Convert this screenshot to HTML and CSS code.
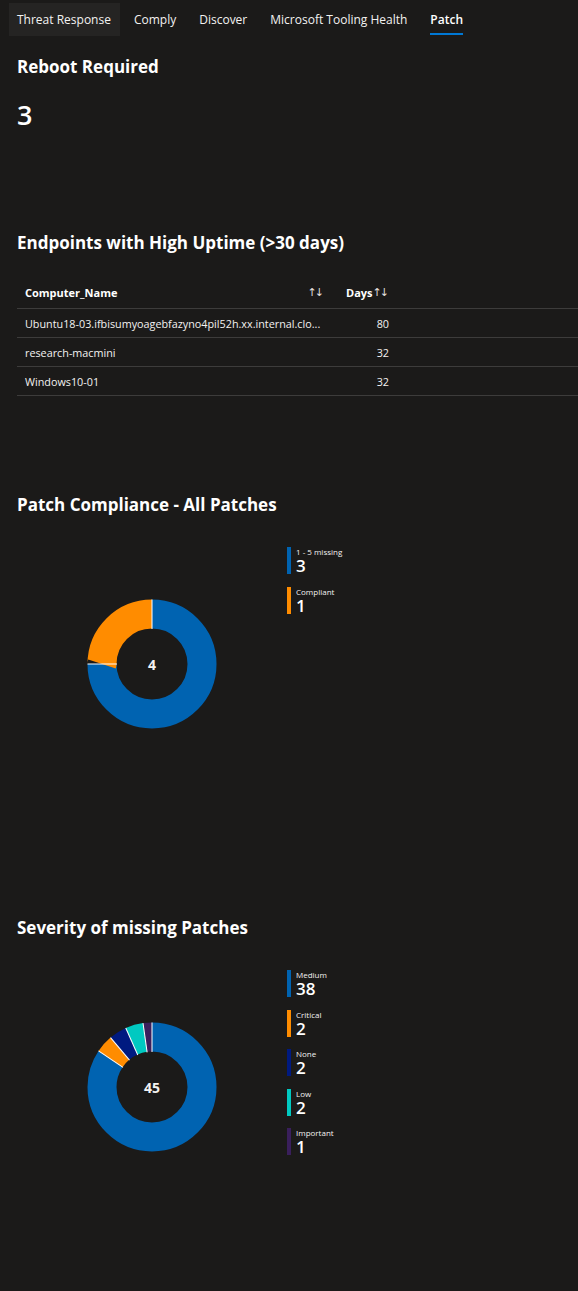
FILE: index.html
```html
<!DOCTYPE html>
<html>
<head>
<meta charset="utf-8">
<link rel="stylesheet" href="styles.css">
</head>
<body>
<nav class="tabs">
  <div class="tab tab-hover">Threat Response</div>
  <div class="tab">Comply</div>
  <div class="tab">Discover</div>
  <div class="tab">Microsoft Tooling Health</div>
  <div class="tab tab-active">Patch</div>
</nav>

<section class="card card-reboot">
  <h2 class="title">Reboot Required</h2>
  <div class="big-number">3</div>
</section>

<section class="card card-uptime">
  <h2 class="title">Endpoints with High Uptime (&gt;30 days)</h2>
  <div class="table">
    <div class="row head">
      <div class="cell name">Computer_Name<span class="sort">↑↓</span></div>
      <div class="cell days">Days<span class="sort-inline">↑↓</span></div>
    </div>
    <div class="row">
      <div class="cell name"><span class="trunc">Ubuntu18-03.ifbisumyoagebfazyno4pil52h.xx.internal.clo...</span></div>
      <div class="cell days num">80</div>
    </div>
    <div class="row">
      <div class="cell name">research-macmini</div>
      <div class="cell days num">32</div>
    </div>
    <div class="row">
      <div class="cell name">Windows10-01</div>
      <div class="cell days num">32</div>
    </div>
  </div>
</section>

<section class="card card-compliance">
  <h2 class="title">Patch Compliance - All Patches</h2>
  <div class="chart">
    <div class="donut">
      <svg width="130" height="130" viewBox="-65 -65 130 130">
        <g transform="rotate(-90)">
          <circle r="50" fill="none" stroke="#0063b1" stroke-width="29" pathLength="4" stroke-dasharray="3 1" stroke-dashoffset="0"/>
          <circle r="50" fill="none" stroke="#ff8c00" stroke-width="29" pathLength="4" stroke-dasharray="1 3" stroke-dashoffset="-3"/>
        </g>
        <g stroke="#ffffff" stroke-width="1">
          <line x1="0" y1="-35" x2="0" y2="-64.5"/>
          <line x1="0" y1="-35" x2="0" y2="-64.5" transform="rotate(270)"/>
        </g>
      </svg>
      <div class="donut-label">4</div>
    </div>
    <ul class="legend">
      <li class="legend-item"><span class="bar c-blue"></span><div class="legend-text"><span class="legend-name">1 - 5 missing</span><span class="legend-value">3</span></div></li>
      <li class="legend-item"><span class="bar c-orange"></span><div class="legend-text"><span class="legend-name">Compliant</span><span class="legend-value">1</span></div></li>
    </ul>
  </div>
</section>

<section class="card card-severity">
  <h2 class="title">Severity of missing Patches</h2>
  <div class="chart">
    <div class="donut">
      <svg width="130" height="130" viewBox="-65 -65 130 130">
        <g transform="rotate(-90)">
          <circle r="50" fill="none" stroke="#0063b1" stroke-width="29" pathLength="45" stroke-dasharray="38 7" stroke-dashoffset="0"/>
          <circle r="50" fill="none" stroke="#ff8c00" stroke-width="29" pathLength="45" stroke-dasharray="2 43" stroke-dashoffset="-38"/>
          <circle r="50" fill="none" stroke="#001a80" stroke-width="29" pathLength="45" stroke-dasharray="2 43" stroke-dashoffset="-40"/>
          <circle r="50" fill="none" stroke="#00c9c1" stroke-width="29" pathLength="45" stroke-dasharray="2 43" stroke-dashoffset="-42"/>
          <circle r="50" fill="none" stroke="#3a1f5c" stroke-width="29" pathLength="45" stroke-dasharray="1 44" stroke-dashoffset="-44"/>
        </g>
        <g stroke="#ffffff" stroke-width="1">
          <line x1="0" y1="-35" x2="0" y2="-64.5"/>
          <line x1="0" y1="-35" x2="0" y2="-64.5" transform="rotate(304)"/>
          <line x1="0" y1="-35" x2="0" y2="-64.5" transform="rotate(320)"/>
          <line x1="0" y1="-35" x2="0" y2="-64.5" transform="rotate(336)"/>
          <line x1="0" y1="-35" x2="0" y2="-64.5" transform="rotate(352)"/>
        </g>
      </svg>
      <div class="donut-label">45</div>
    </div>
    <ul class="legend legend-tight">
      <li class="legend-item"><span class="bar c-blue"></span><div class="legend-text"><span class="legend-name">Medium</span><span class="legend-value">38</span></div></li>
      <li class="legend-item"><span class="bar c-orange"></span><div class="legend-text"><span class="legend-name">Critical</span><span class="legend-value">2</span></div></li>
      <li class="legend-item"><span class="bar c-navy"></span><div class="legend-text"><span class="legend-name">None</span><span class="legend-value">2</span></div></li>
      <li class="legend-item"><span class="bar c-teal"></span><div class="legend-text"><span class="legend-name">Low</span><span class="legend-value">2</span></div></li>
      <li class="legend-item"><span class="bar c-purple"></span><div class="legend-text"><span class="legend-name">Important</span><span class="legend-value">1</span></div></li>
    </ul>
  </div>
</section>
</body>
</html>
```

FILE: styles.css
```css
html, body {
  margin: 0;
  padding: 0;
  background: #1b1a19;
  color: #ffffff;
  font-family: "Open Sans", "Noto Sans", sans-serif;
}

body {
  width: 578px;
  height: 1291px;
  overflow: hidden;
}

.tabs {
  display: flex;
  align-items: stretch;
  gap: 6px;
  margin: 3px 0 0 9px;
  height: 33px;
}

.tab {
  display: flex;
  align-items: center;
  padding: 0 9px 0 8px;
  font-size: 12px;
  color: #f3f2f1;
  position: relative;
  white-space: nowrap;
}

.tab-hover {
  background: #252423;
}

.tab-active {
  font-weight: 600;
  color: #ffffff;
}

.tab-active::after {
  content: "";
  position: absolute;
  left: 8px;
  right: 9px;
  bottom: 1px;
  height: 2px;
  background: #0078d4;
}

.card {
  padding-left: 17px;
}

.title {
  margin: 0;
  font-size: 17px;
  line-height: 22px;
  font-weight: 700;
  color: #ffffff;
}

.card-reboot {
  margin-top: 20px;
}

.big-number {
  margin-top: 20px;
  font-size: 27px;
  line-height: 34px;
  font-weight: 600;
}

.card-uptime {
  margin-top: 100px;
}

.table {
  margin-top: 22px;
  font-size: 10.8px;
  color: #f3f2f1;
}

.row {
  display: flex;
  height: 28px;
  align-items: center;
  border-bottom: 1px solid #3d3c3b;
}

.row.head {
  height: 32px;
  font-weight: 700;
  color: #ffffff;
  font-size: 11px;
}

.cell {
  display: flex;
  align-items: center;
}

.cell.name {
  width: 301px;
  padding-left: 8px;
  padding-right: 12px;
  overflow: hidden;
  white-space: nowrap;
}

.trunc {
  white-space: nowrap;
}

.sort,
.sort-inline {
  font-family: "DejaVu Sans", sans-serif;
  font-weight: 400;
  font-size: 11px;
  letter-spacing: -2px;
  color: #e1dfdd;
}

.sort {
  margin-left: auto;
  margin-right: 4px;
}

.cell.days {
  width: 43px;
  padding-left: 8px;
  padding-right: 8px;
}

.cell.num {
  justify-content: flex-end;
}

.card-compliance {
  margin-top: 98px;
}

.card-severity {
  margin-top: 188px;
}

.chart {
  display: flex;
  align-items: flex-start;
  margin-top: 31px;
  padding-left: 70px;
}

.donut {
  position: relative;
  width: 130px;
  height: 130px;
  margin-top: 52px;
}

.donut svg {
  display: block;
}

.donut-label {
  position: absolute;
  inset: 0;
  display: flex;
  align-items: center;
  justify-content: center;
  font-size: 14px;
  font-weight: 700;
  color: #f3f2f1;
}

.legend {
  list-style: none;
  margin: 0 0 0 70px;
  padding: 0;
  display: flex;
  flex-direction: column;
  gap: 13px;
}

.legend-tight {
  gap: 12.5px;
}

.legend-item {
  display: flex;
  align-items: stretch;
  height: 27px;
}

.bar {
  width: 4px;
  flex: none;
}

.c-blue { background: #0063b1; }
.c-orange { background: #ff8c00; }
.c-navy { background: #001a80; }
.c-teal { background: #00c9c1; }
.c-purple { background: #3a1f5c; }

.legend-text {
  display: flex;
  flex-direction: column;
  margin-left: 5px;
}

.legend-name {
  font-size: 8px;
  line-height: 10px;
  color: #f3f2f1;
}

.legend-value {
  font-size: 17px;
  line-height: 17px;
  font-weight: 600;
  color: #ffffff;
}
```
